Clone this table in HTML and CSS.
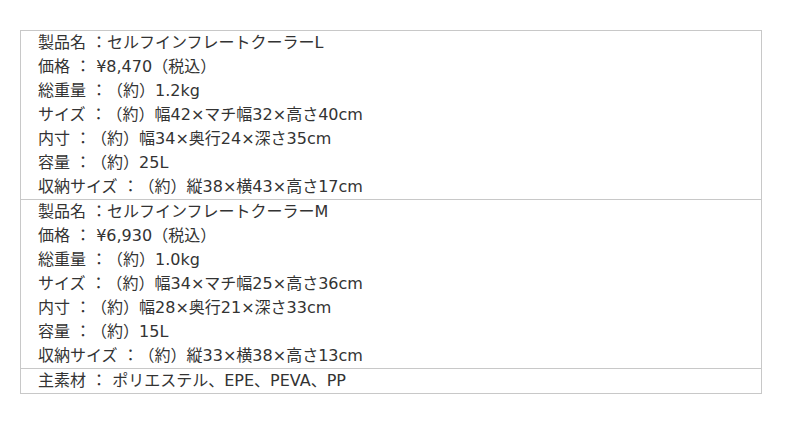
FILE: index.html
```html
<!DOCTYPE html>
<html lang="ja">
<head>
<meta charset="utf-8">
<link rel="stylesheet" href="styles.css">
</head>
<body>
<table class="spec">
  <tr><td>
    <div>製品名 ：セルフインフレートクーラーL</div>
    <div>価格 ： ¥8,470（税込）</div>
    <div>総重量 ：（約）1.2kg</div>
    <div>サイズ ：（約）幅42×マチ幅32×高さ40cm</div>
    <div>内寸 ：（約）幅34×奥行24×深さ35cm</div>
    <div>容量 ：（約）25L</div>
    <div>収納サイズ ：（約）縦38×横43×高さ17cm</div>
  </td></tr>
  <tr><td>
    <div>製品名 ：セルフインフレートクーラーM</div>
    <div>価格 ： ¥6,930（税込）</div>
    <div>総重量 ：（約）1.0kg</div>
    <div>サイズ ：（約）幅34×マチ幅25×高さ36cm</div>
    <div>内寸 ：（約）幅28×奥行21×深さ33cm</div>
    <div>容量 ：（約）15L</div>
    <div>収納サイズ ：（約）縦33×横38×高さ13cm</div>
  </td></tr>
  <tr><td>
    <div>主素材 ： ポリエステル、EPE、PEVA、PP</div>
  </td></tr>
</table>
</body>
</html>
```
FILE: styles.css
```css
html, body {
  margin: 0;
  padding: 0;
  background: #fff;
}
body {
  padding: 30px 0 0 20px;
  font-family: "DejaVu Sans", "Noto Sans CJK JP", sans-serif;
  font-size: 16px;
  color: #333;
  text-spacing-trim: space-all;
}
.spec {
  width: 742px;
  border-collapse: collapse;
}
.spec td {
  border: 1px solid #c8c8c8;
  padding: 0 17px;
  line-height: 24px;
}
```
